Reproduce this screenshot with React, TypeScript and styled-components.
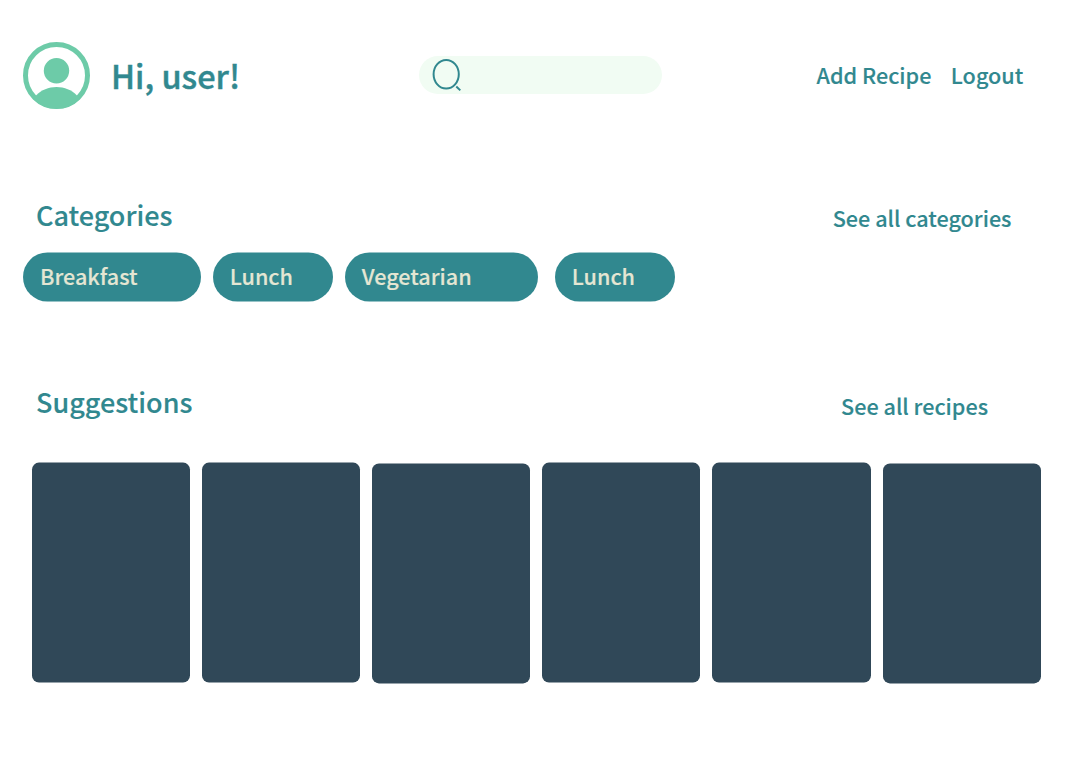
import React from "react";
import styled, { createGlobalStyle } from "styled-components";

const teal = "#31888f";

const GlobalStyle = createGlobalStyle`
  * { box-sizing: border-box; }
  body {
    margin: 0;
    background: #fff;
    color: ${teal};
    font-family: "Noto Sans CJK SC", "Noto Sans", sans-serif;
    font-weight: 500;
    -webkit-text-stroke-width: 0.12px;
  }
`;

const Page = styled.main`
  width: 1080px;
  height: 769px;
  overflow: hidden;
`;

const Header = styled.header`
  display: flex;
  align-items: flex-start;
  height: 199px;
  padding: 42px 0 0 23px;
`;

const Avatar = styled.svg`
  flex: none;
  width: 67px;
  height: 67px;
`;

const Greeting = styled.h1`
  width: 308px;
  margin: 9px 0 0 21px;
  font-size: 32.5px;
  font-weight: 500;
  line-height: 48px;
  white-space: nowrap;
  -webkit-text-stroke-width: 0.4px;
`;

const SearchBar = styled.div`
  width: 242.5px;
  height: 38px;
  margin-top: 14px;
  padding: 2px 0 0 12px;
  border-radius: 19px;
  background: #f1fcf3;
`;

const SearchIcon = styled.svg`
  display: block;
  width: 32px;
  height: 34px;
`;

const Nav = styled.nav`
  display: flex;
  gap: 19.5px;
  margin: 16px 0 0 155px;
`;

const TextLink = styled.a`
  color: ${teal};
  font-size: 21.6px;
  line-height: 34px;
  white-space: nowrap;
`;

const Section = styled.section<{ $height: number }>`
  height: ${(p) => p.$height}px;
`;

const SectionHead = styled.div<{ $right: number; $gap: number }>`
  display: flex;
  justify-content: space-between;
  padding: 0 ${(p) => p.$right}px 0 36px;
  margin-bottom: ${(p) => p.$gap}px;
`;

const Title = styled.h2<{ $lineHeight: number }>`
  margin: 0;
  font-size: 27px;
  font-weight: 500;
  line-height: ${(p) => p.$lineHeight}px;
  white-space: nowrap;
`;

const SectionLink = styled(TextLink)`
  height: 38px;
  line-height: 37px;
`;

const Chips = styled.div`
  display: flex;
  padding-left: 23px;
`;

const Chip = styled.span<{ $width: number; $gap: number }>`
  width: ${(p) => p.$width}px;
  height: 49px;
  margin-right: ${(p) => p.$gap}px;
  padding-left: 17px;
  border-radius: 25px;
  background: ${teal};
  color: #e4e6d3;
  font-size: 21.6px;
  line-height: 46px;
  white-space: nowrap;
  transform: translateY(-0.5px);
`;

const Cards = styled.div`
  display: flex;
  gap: 12.05px;
  padding-left: 31.5px;
`;

const Card = styled.article<{ $drop: boolean }>`
  width: 158.2px;
  height: 220px;
  border-radius: 7px;
  background: #304858;
  transform: translateY(${(p) => (p.$drop ? 0.4 : -0.4)}px);
`;

const categories = [
  { name: "Breakfast", width: 178, gap: 11.7 },
  { name: "Lunch", width: 120.3, gap: 11.8 },
  { name: "Vegetarian", width: 193, gap: 17 },
  { name: "Lunch", width: 120.3, gap: 0 },
];

const recipes = [false, false, true, false, false, true];

export default function App() {
  return (
    <Page>
      <GlobalStyle />
      <Header>
        <Avatar viewBox="0 0 67 67" fill="#6dcba8">
          <circle cx="33.5" cy="33.5" r="31" fill="none" stroke="#6dcba8" strokeWidth="5" />
          <circle cx="33.5" cy="28.7" r="12.7" />
          <path d="M13 53.5C18.5 48 25.5 45.1 33.5 45.1S48.5 48 54 53.5L57 57A33.5 33.5 0 0 1 10 57Z" />
        </Avatar>
        <Greeting>Hi, user!</Greeting>
        <SearchBar>
          <SearchIcon viewBox="0 0 32 34" fill="none" stroke={teal} strokeWidth="2">
            <ellipse cx="15.2" cy="16.3" rx="12.6" ry="14.3" />
            <path d="M25.3 28.5L29.3 32.4" />
          </SearchIcon>
        </SearchBar>
        <Nav>
          <TextLink>Add Recipe</TextLink>
          <TextLink>Logout</TextLink>
        </Nav>
      </Header>
      <Section $height={188}>
        <SectionHead $right={68.5} $gap={16}>
          <Title $lineHeight={32}>Categories</Title>
          <SectionLink>See all categories</SectionLink>
        </SectionHead>
        <Chips>
          {categories.map((c, i) => (
            <Chip key={i} $width={c.width} $gap={c.gap}>
              {c.name}
            </Chip>
          ))}
        </Chips>
      </Section>
      <Section $height={382}>
        <SectionHead $right={92} $gap={38}>
          <Title $lineHeight={30}>Suggestions</Title>
          <SectionLink>See all recipes</SectionLink>
        </SectionHead>
        <Cards>
          {recipes.map((drop, i) => (
            <Card key={i} $drop={drop} />
          ))}
        </Cards>
      </Section>
    </Page>
  );
}
